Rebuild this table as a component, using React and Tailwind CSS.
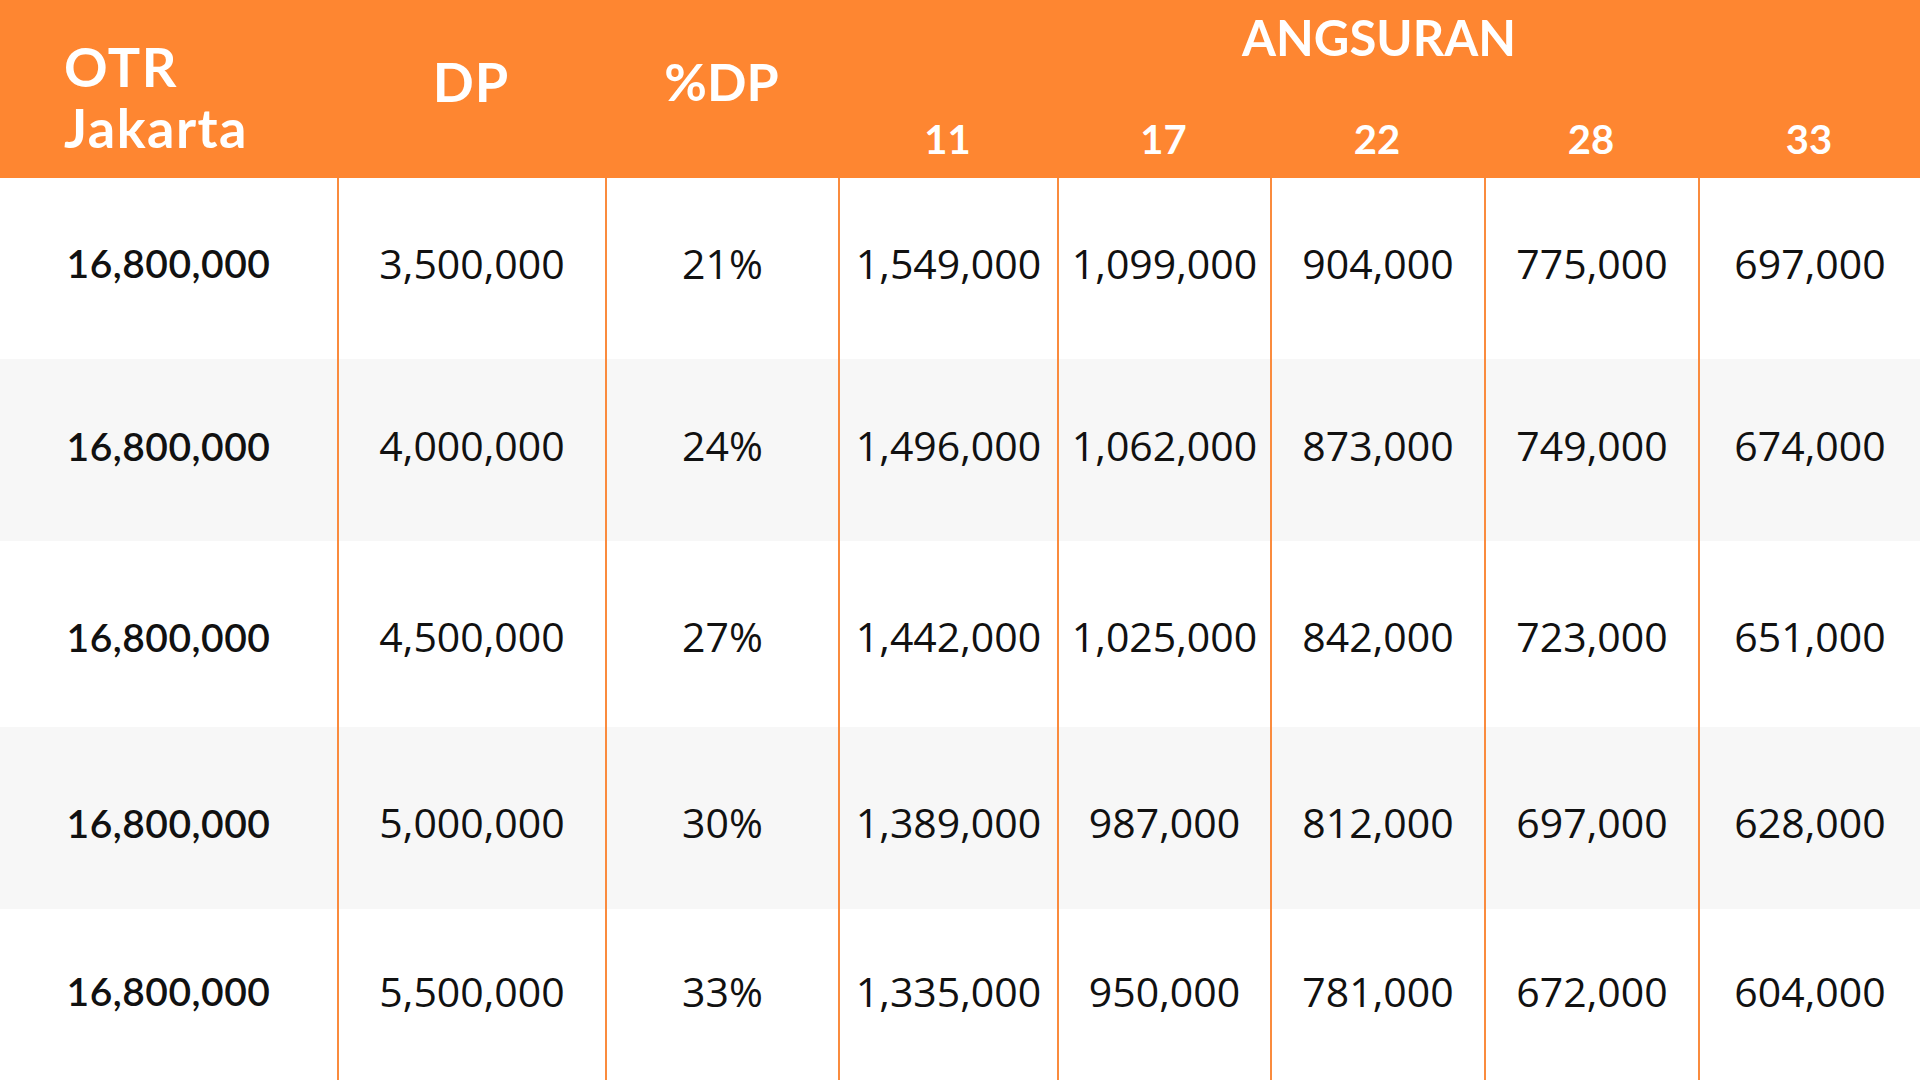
import React from 'react';

const cols = 'grid grid-cols-[337px_268px_233px_219px_213px_214px_214px_222px]';

const rows = [
  { vals: ['16,800,000', '3,500,000', '21%', '1,549,000', '1,099,000', '904,000', '775,000', '697,000'], h: 'h-[181px] bg-white', pad: 'pb-[10px]' },
  { vals: ['16,800,000', '4,000,000', '24%', '1,496,000', '1,062,000', '873,000', '749,000', '674,000'], h: 'h-[182px] bg-[#f7f7f7]', pad: 'pb-[8px]' },
  { vals: ['16,800,000', '4,500,000', '27%', '1,442,000', '1,025,000', '842,000', '723,000', '651,000'], h: 'h-[186px] bg-white', pad: 'pt-[6px]' },
  { vals: ['16,800,000', '5,000,000', '30%', '1,389,000', '987,000', '812,000', '697,000', '628,000'], h: 'h-[182px] bg-[#f7f7f7]', pad: 'pt-[10px]' },
  { vals: ['16,800,000', '5,500,000', '33%', '1,335,000', '950,000', '781,000', '672,000', '604,000'], h: 'flex-1 bg-white', pad: 'pb-[6px]' },
];

const tenors = ['11', '17', '22', '28', '33'];

export default function App() {
  return (
    <div className="w-[1920px] h-[1080px] bg-white overflow-hidden flex flex-col font-['Lato',sans-serif]">
      {/* Header */}
      <div className={`${cols} h-[178px] shrink-0 bg-[#fe8631] text-white font-bold`}>
        <div className="pl-[64px] pt-[36px] text-[54px] leading-[61px] tracking-[1.5px]">
          OTR
          <br />
          Jakarta
        </div>
        <div className="pt-[51px] text-center text-[54px] leading-[61px] tracking-[1px]">DP</div>
        <div className="pt-[51px] text-center text-[52px] leading-[61px]">%DP</div>
        <div className="col-span-5 flex flex-col">
          <div className="pt-[8px] h-[115px] text-center text-[49px] leading-[59px]">ANGSURAN</div>
          <div className="grid grid-cols-[219px_213px_214px_214px_222px] text-[40px] leading-[48px]">
            {tenors.map((t) => (
              <div key={t} className="text-center">{t}</div>
            ))}
          </div>
        </div>
      </div>

      {/* Body */}
      <div className="flex-1 flex flex-col text-[#111]">
        {rows.map((row, i) => (
          <div key={i} className={`${cols} ${row.h}`}>
            {row.vals.map((v, j) => (
              <div
                key={j}
                className={
                  j === 0
                    ? `flex items-center justify-center text-[39px] font-semibold tracking-[0.5px] ${row.pad}`
                    : `flex items-center justify-center border-l-2 border-[#fa8b3e] font-['Open_Sans',sans-serif] text-[41px] ${row.pad}`
                }
              >
                {v}
              </div>
            ))}
          </div>
        ))}
      </div>
    </div>
  );
}
